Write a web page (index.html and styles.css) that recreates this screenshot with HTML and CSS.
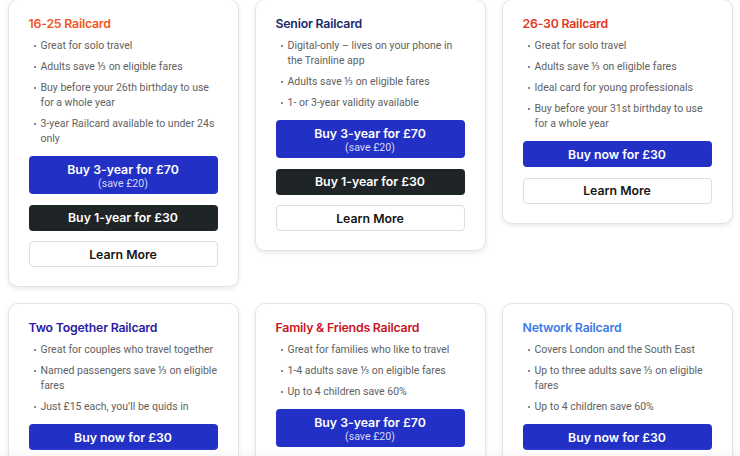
FILE: index.html
```html
<!DOCTYPE html>
<html lang="en">
<head>
<meta charset="utf-8">
<title>Railcards</title>
<link rel="stylesheet" href="styles.css">
</head>
<body>
<main class="grid">
  <section class="card">
    <h3 class="title t-orange">16-25 Railcard</h3>
    <ul class="list">
      <li>Great for solo travel</li>
      <li>Adults save ⅓ on eligible fares</li>
      <li>Buy before your 26th birthday to use for a whole year</li>
      <li>3-year Railcard available to under 24s only</li>
    </ul>
    <div class="actions">
      <a class="btn btn-blue btn-tall"><span class="main">Buy 3-year for £70</span><span class="sub">(save £20)</span></a>
      <a class="btn btn-dark">Buy 1-year for £30</a>
      <a class="btn btn-light">Learn More</a>
    </div>
  </section>
  <section class="card">
    <h3 class="title t-navy">Senior Railcard</h3>
    <ul class="list">
      <li>Digital-only – lives on your phone in the Trainline app</li>
      <li>Adults save ⅓ on eligible fares</li>
      <li>1- or 3-year validity available</li>
    </ul>
    <div class="actions">
      <a class="btn btn-blue btn-tall"><span class="main">Buy 3-year for £70</span><span class="sub">(save £20)</span></a>
      <a class="btn btn-dark">Buy 1-year for £30</a>
      <a class="btn btn-light">Learn More</a>
    </div>
  </section>
  <section class="card">
    <h3 class="title t-red">26-30 Railcard</h3>
    <ul class="list">
      <li>Great for solo travel</li>
      <li>Adults save ⅓ on eligible fares</li>
      <li>Ideal card for young professionals</li>
      <li>Buy before your 31st birthday to use for a whole year</li>
    </ul>
    <div class="actions">
      <a class="btn btn-blue">Buy now for £30</a>
      <a class="btn btn-light">Learn More</a>
    </div>
  </section>
  <section class="card">
    <h3 class="title t-indigo">Two Together Railcard</h3>
    <ul class="list">
      <li>Great for couples who travel together</li>
      <li>Named passengers save ⅓ on eligible fares</li>
      <li>Just £15 each, you’ll be quids in</li>
    </ul>
    <div class="actions">
      <a class="btn btn-blue">Buy now for £30</a>
      <a class="btn btn-light">Learn More</a>
    </div>
  </section>
  <section class="card">
    <h3 class="title t-crimson">Family &amp; Friends Railcard</h3>
    <ul class="list">
      <li>Great for families who like to travel</li>
      <li>1-4 adults save ⅓ on eligible fares</li>
      <li>Up to 4 children save 60%</li>
    </ul>
    <div class="actions">
      <a class="btn btn-blue btn-tall"><span class="main">Buy 3-year for £70</span><span class="sub">(save £20)</span></a>
      <a class="btn btn-dark">Buy 1-year for £30</a>
      <a class="btn btn-light">Learn More</a>
    </div>
  </section>
  <section class="card">
    <h3 class="title t-blue">Network Railcard</h3>
    <ul class="list">
      <li>Covers London and the South East</li>
      <li>Up to three adults save ⅓ on eligible fares</li>
      <li>Up to 4 children save 60%</li>
    </ul>
    <div class="actions">
      <a class="btn btn-blue">Buy now for £30</a>
      <a class="btn btn-light">Learn More</a>
    </div>
  </section>
</main>
<div class="fade"></div>
</body>
</html>
```

FILE: styles.css
```css
html, body {
  margin: 0;
  padding: 0;
  overflow: hidden;
  background: #ffffff;
}

body {
  font-family: Roboto, "Noto Sans", "Liberation Sans", sans-serif;
  color: #616161;
}

.grid {
  display: grid;
  grid-template-columns: repeat(3, 231px);
  column-gap: 16px;
  row-gap: 16px;
  align-items: start;
  justify-content: center;
  margin-top: -1px;
}

.card {
  background: #fff;
  border: 1px solid #e4e4e4;
  border-radius: 10px;
  box-shadow: 0 2px 5px rgba(0, 0, 0, 0.09);
  padding: 16px 20px 19px;
}

.title {
  margin: 0 0 6px;
  font-family: Inter, "Noto Sans", sans-serif;
  font-size: 12.3px;
  line-height: 16px;
  font-weight: 600;
  letter-spacing: -0.2px;
}

.t-orange { color: #f4561d; }
.t-navy { color: #1b2a6b; }
.t-red { color: #e3361c; }
.t-indigo { color: #2b1ba6; }
.t-crimson { color: #c8151d; }
.t-blue { color: #3a7be6; }

.list {
  list-style: none;
  margin: 0 0 10px;
  padding: 0 0 0 12px;
  font-size: 10.5px;
  line-height: 15px;
}

.list li {
  position: relative;
  margin-bottom: 6px;
}

.list li:last-child {
  margin-bottom: 0;
}

.list li::before {
  content: "";
  position: absolute;
  left: -7px;
  top: 6.5px;
  width: 2.6px;
  height: 2.6px;
  border-radius: 50%;
  background: #616161;
}

.actions {
  display: flex;
  flex-direction: column;
  gap: 10.5px;
}

.btn {
  display: flex;
  flex-direction: column;
  align-items: center;
  justify-content: center;
  height: 26px;
  box-sizing: border-box;
  border-radius: 4px;
  font-family: Inter, "Noto Sans", sans-serif;
  font-size: 12.3px;
  font-weight: 600;
  line-height: 15px;
}

.btn-tall {
  height: 38px;
  padding-top: 1px;
}

.btn-blue {
  background: #2230c6;
  color: #fff;
}

.btn-dark {
  background: #1f2427;
  color: #fff;
}

.btn-light {
  background: #fff;
  border: 1px solid #dedede;
  color: #151515;
}

.sub {
  font-family: Roboto, "Noto Sans", sans-serif;
  font-size: 10.6px;
  font-weight: 400;
  line-height: 13px;
  color: rgba(255, 255, 255, 0.82);
}

.fade {
  position: fixed;
  left: 0;
  right: 0;
  bottom: 0;
  height: 8px;
  background: linear-gradient(to bottom, rgba(240, 240, 240, 0), rgba(236, 236, 236, 0.35));
  pointer-events: none;
}
```
